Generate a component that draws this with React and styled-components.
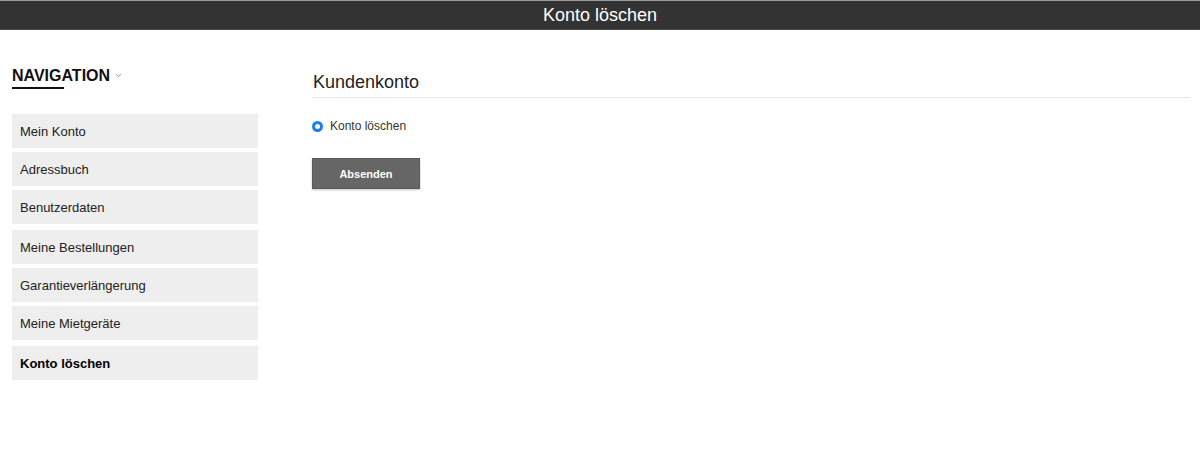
import React from "react";
import styled, { createGlobalStyle } from "styled-components";

const GlobalStyle = createGlobalStyle`
  html, body {
    margin: 0;
    padding: 0;
    background: #fff;
    font-family: "Liberation Sans", Arial, sans-serif;
    color: #222;
  }
`;

const groups = [
  ["Mein Konto", "Adressbuch", "Benutzerdaten"],
  ["Meine Bestellungen", "Garantieverlängerung", "Meine Mietgeräte"],
  ["Konto löschen"],
];

const active = "Konto löschen";

function App() {
  return (
    <>
      <GlobalStyle />
      <TopBar>Konto löschen</TopBar>
      <Main>
        <Sidebar>
          <NavTitle>
            NAVIGATION
            <Chevron width="7" height="5" viewBox="0 0 7 5">
              <path d="M1 1.2 L3.5 3.6 L6 1.2" fill="none" stroke="#888" strokeWidth="0.9" />
            </Chevron>
          </NavTitle>
          <NavGroups>
            {groups.map((group, i) => (
              <NavGroup key={i}>
                {group.map((label) => (
                  <NavItem key={label} $active={label === active}>
                    {label}
                  </NavItem>
                ))}
              </NavGroup>
            ))}
          </NavGroups>
        </Sidebar>
        <Content>
          <Heading>Kundenkonto</Heading>
          <RadioRow>
            <Radio />
            <RadioLabel>Konto löschen</RadioLabel>
          </RadioRow>
          <SubmitButton>Absenden</SubmitButton>
        </Content>
      </Main>
    </>
  );
}

const TopBar = styled.header`
  height: 28px;
  border-top: 1px solid #9a9a9a;
  border-bottom: 1px solid #4a4a4a;
  background: #333;
  color: #fff;
  font-size: 18px;
  line-height: 28px;
  text-align: center;
`;

const Main = styled.main`
  display: grid;
  grid-template-columns: 246px 1fr;
  column-gap: 54px;
  padding: 36px 10px 0 12px;
`;

const Sidebar = styled.aside`
  display: flex;
  flex-direction: column;
`;

const NavTitle = styled.div`
  display: flex;
  align-items: center;
  gap: 5px;
  font-size: 16px;
  line-height: 20px;
  font-weight: bold;
  color: #111;
  position: relative;
  padding-bottom: 3px;
  margin-bottom: 25px;

  &::after {
    content: "";
    position: absolute;
    left: 0;
    bottom: 0;
    width: 52px;
    height: 2px;
    background: #111;
  }
`;

const Chevron = styled.svg`
  margin-top: -2px;
`;

const NavGroups = styled.nav`
  display: flex;
  flex-direction: column;
  gap: 6px;
`;

const NavGroup = styled.div`
  display: flex;
  flex-direction: column;
  gap: 4px;
`;

const NavItem = styled.div`
  height: 34px;
  display: flex;
  align-items: center;
  padding-left: 8px;
  background: #eeeeee;
  font-size: 13px;
  color: ${(props) => (props.$active ? "#000" : "#222")};
  font-weight: ${(props) => (props.$active ? "bold" : "normal")};
`;

const Content = styled.section`
  display: flex;
  flex-direction: column;
  align-items: flex-start;
  padding-top: 5px;
`;

const Heading = styled.h1`
  align-self: stretch;
  margin: 0;
  font-size: 18px;
  line-height: 22px;
  font-weight: normal;
  color: #222;
  padding: 0 0 4px 1px;
  border-bottom: 1px solid #e6e6e6;
`;

const RadioRow = styled.label`
  display: flex;
  align-items: center;
  gap: 7px;
  margin-top: 20px;
  height: 16px;
`;

const Radio = styled.span`
  width: 5px;
  height: 5px;
  border-radius: 50%;
  background: #fff;
  border: 3px solid #1a7ef0;
`;

const RadioLabel = styled.span`
  font-size: 12px;
  line-height: 16px;
  color: #333;
`;

const SubmitButton = styled.button`
  margin-top: 24px;
  width: 108px;
  height: 31px;
  border: 1px solid #5a5a5a;
  background: #666;
  color: #fff;
  font-family: "Liberation Sans", Arial, sans-serif;
  font-size: 11px;
  font-weight: bold;
  box-shadow: 0 1px 2px rgba(0, 0, 0, 0.25);
  cursor: pointer;
`;

export default App;
